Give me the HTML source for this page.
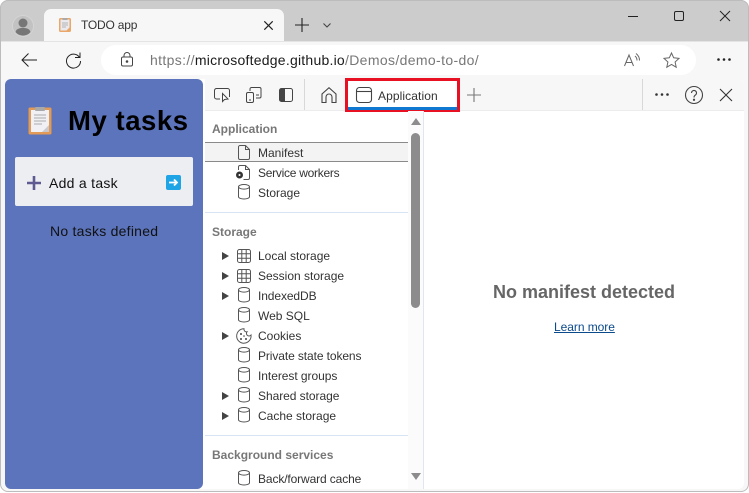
<!DOCTYPE html>
<html><head><meta charset="utf-8"><style>
*{box-sizing:border-box}
html,body{margin:0;padding:0}
body{width:749px;height:493px;overflow:hidden;position:relative;background:#fff;font-family:"Liberation Sans",sans-serif;color:#333}
.a{position:absolute}
.t{position:absolute;white-space:nowrap;line-height:16px}
svg{position:absolute;overflow:visible;fill:none}
.n{font-size:12px;color:#333;left:258px}
.h{font-size:12px;font-weight:bold;color:#777;left:212px}
</style></head><body>
<svg width="0" height="0" style="left:0;top:0"><defs><g id="db"><ellipse cx="6" cy="2.800" rx="5.500" ry="2.300"/><path d="M.5 2.800v9.900c0 1.300 2.500 2.300 5.500 2.300s5.500-1 5.500-2.300V2.800"/></g><g id="gr"><rect x=".5" y=".5" width="13" height="13" rx="2"/><path d="M4.800.5v13M9.200.5v13M.5 4.800h13M.5 9.200h13"/></g></defs></svg>
<div class="a" style="left:0;top:0;width:749px;height:492px;background:#f7f7f7;border-radius:8px"></div>
<div class="a" style="left:0;top:0;width:749px;height:41px;background:#cccccc;border-radius:8px 8px 0 0"></div>
<div class="a" style="left:44px;top:9px;width:240px;height:32px;background:#f7f7f7;border-radius:7px 7px 0 0"></div>
<!-- profile -->
<svg style="left:12px;top:15px" width="22" height="22"><circle cx="11" cy="11" r="10.500" fill="#c2c2c2" stroke="#d4d4d4"/><circle cx="11" cy="8" r="4.500" fill="#777"/><path d="M3.500 17c1-3.500 4-4 7.500-4s6.500.5 7.500 4c-2 2.500-5 3.500-7.500 3.500s-5.500-1-7.500-3.500z" fill="#777"/></svg>
<!-- favicon -->
<svg style="left:59px;top:18px" width="12" height="14"><rect x="0" y="0" width="12" height="14" rx="1.500" fill="#eaa76a"/><rect x="1.500" y="1.500" width="9" height="11" fill="#e9e9ef"/><rect x="3.500" y="0" width="5" height="2" fill="#a9a9a9"/><path d="M3 5h6M3 7h6M3 9h4" stroke="#b5b5b5"/><path d="M7.500 12.500l3-3v3z" fill="#eaa76a"/></svg>
<div class="t" style="left:81px;top:17px;font-size:12px;color:#333;letter-spacing:-.2px">TODO app</div>
<svg style="left:264px;top:21px" width="9" height="9" stroke="#222" stroke-width="1.200"><path d="M.3.300l8.400 8.400M8.700.300L.3 8.700"/></svg>
<svg style="left:295px;top:18px" width="14" height="14" stroke="#222" stroke-width="1.100"><path d="M7 0v14M0 7h14"/></svg>
<svg style="left:323px;top:23px" width="8" height="5" stroke="#444" stroke-width="1.100"><path d="M.5.500L4 4 7.500.5"/></svg>
<!-- window controls -->
<svg style="left:628px;top:16px" width="10" height="2" stroke="#222"><path d="M0 .5h10"/></svg>
<svg style="left:674px;top:11px" width="10" height="10" stroke="#222"><rect x=".5" y=".5" width="9" height="9" rx="1.500"/></svg>
<svg style="left:720px;top:11px" width="10" height="10" stroke="#222"><path d="M0 0l10 10M10 0L0 10"/></svg>
<div class="a" style="left:0;top:41px;width:749px;height:1px;background:#e4e4e4"></div>
<!-- nav -->
<svg style="left:21px;top:53px" width="16" height="14" stroke="#222"><path d="M16 7H1M7.500.5L1 7l6.500 6.500"/></svg>
<svg style="left:65px;top:52px" width="16" height="16" stroke="#222"><path d="M14.500 5.500A7 7 0 1 0 15.500 9M15 .5v5h-5"/></svg>
<div class="a" style="left:101px;top:45px;width:595px;height:30px;background:#fff;border-radius:15px"></div>
<svg style="left:121px;top:52px" width="12" height="15" stroke="#444"><rect x=".5" y="5" width="11" height="9" rx="1.500"/><path d="M3 5V3.500a3 3 0 0 1 6 0V5"/><circle cx="6" cy="9.500" r=".8" fill="#444"/></svg>
<div class="t" style="left:150px;top:52px;font-size:14px;color:#777;letter-spacing:.36px">https://<span style="color:#1a1a1a;letter-spacing:.23px">microsoftedge.github.io</span>/Demos/demo-to-do/</div>
<svg style="left:624px;top:53px" width="17" height="14" stroke="#666"><path d="M.5 13L5 2l4.500 11M2 9.500h6"/><path d="M12 .5c2 1.500 3.500 4 3.500 7M11 3c1.200 1 2 2.500 2 4.500"/></svg>
<svg style="left:663px;top:52px" width="17" height="16" stroke="#666"><path d="M8.500 1l2.200 4.800 5.300.6-3.900 3.600 1.100 5.200-4.700-2.700-4.700 2.700 1.100-5.200L1 6.400l5.300-.6z"/></svg>
<svg style="left:717px;top:58px" width="14" height="3"><circle cx="1.500" cy="1.500" r="1.300" fill="#222"/><circle cx="7" cy="1.500" r="1.300" fill="#222"/><circle cx="12.500" cy="1.500" r="1.300" fill="#222"/></svg>
<!-- page -->
<div class="a" style="left:5px;top:79px;width:739px;height:410px;background:#fff;border-radius:6px"></div>
<div class="a" style="left:5px;top:79px;width:198px;height:410px;background:#5c74bb;border-radius:6px"></div>
<svg style="left:28px;top:106px" width="24" height="29"><rect x=".5" y="1.500" width="23" height="27" rx="1.500" fill="#e29a56"/><rect x="3" y="4" width="18" height="22" fill="#f1f1f5"/><rect x="7" y="1" width="10" height="4" rx="1" fill="#a9a9a9"/><path d="M6 9h12M6 12h12M6 15h12M6 18h8" stroke="#aaa"/><path d="M14 26l7-7v7z" fill="#c9c9cf"/></svg>
<div class="t" style="left:68px;top:104px;font-size:27.500px;line-height:34px;font-weight:bold;color:#000;letter-spacing:.55px">My tasks</div>
<div class="a" style="left:15px;top:157px;width:178px;height:49px;background:#edeef2;border-radius:2px"></div>
<svg style="left:27px;top:176px" width="14" height="14" stroke="#5f5a92" stroke-width="2.600"><path d="M7 0v14M0 7h14"/></svg>
<div class="t" style="left:49px;top:175px;font-size:14px;color:#111;letter-spacing:.28px">Add a task</div>
<svg style="left:166px;top:175px" width="15" height="15"><rect width="15" height="15" rx="2" fill="#1fa5e6"/><path d="M3 7.500h8M8 4.500l3 3-3 3" stroke="#fff" stroke-width="1.800"/></svg>
<div class="t" style="left:50px;top:223px;font-size:14px;color:#111;letter-spacing:.25px">No tasks defined</div>
<!-- devtools toolbar -->
<div class="a" style="left:205px;top:79px;width:539px;height:31px;background:#f7f7f7;border-radius:0 6px 0 0"></div>
<div class="a" style="left:205px;top:110px;width:539px;height:1px;background:#ececec"></div>
<svg style="left:214px;top:88px" width="17" height="15" stroke="#444"><path d="M6 11H2.500a2 2 0 0 1-2-2V2.500a2 2 0 0 1 2-2h11a2 2 0 0 1 2 2V9"/><path d="M8.500 5.500v8l2-2 3.500-.5z" fill="#fff"/></svg>
<svg style="left:246px;top:87px" width="16" height="16" stroke="#444"><rect x=".5" y="5.500" width="7" height="10" rx="1.500"/><path d="M4 4V2a1.500 1.500 0 0 1 1.500-1.500h8A1.500 1.500 0 0 1 15 2v7.500A1.500 1.500 0 0 1 13.500 11H10M10 8h3M3 13h2"/></svg>
<svg style="left:279px;top:88px" width="14" height="14" stroke="#444"><rect x=".5" y=".5" width="13" height="13" rx="2"/><rect x="1" y="1" width="5" height="12" fill="#444" stroke="none"/></svg>
<div class="a" style="left:304px;top:79px;width:1px;height:31px;background:#d8d8d8"></div>
<svg style="left:321px;top:87px" width="16" height="16" stroke="#444" stroke-width="1.100"><path d="M1 15.500V7l7-6.300L15 7v8.500h-4V10a3 3 0 0 0-6 0v5.500z"/></svg>
<div class="a" style="left:345px;top:78px;width:115px;height:34px;background:#fff;border:3px solid #e81123"></div>
<div class="a" style="left:348px;top:107px;width:109px;height:3px;background:#0f78d0"></div>
<svg style="left:356px;top:87px" width="16" height="16" stroke="#444" stroke-width="1.100"><rect x=".5" y=".5" width="15" height="15" rx="3"/><path d="M.5 4.500h15"/></svg>
<div class="t" style="left:378px;top:88px;font-size:12px;color:#333;letter-spacing:.1px">Application</div>
<svg style="left:467px;top:88px" width="14" height="14" stroke="#777" stroke-width="1.100"><path d="M7 0v14M0 7h14"/></svg>
<div class="a" style="left:642px;top:79px;width:1px;height:31px;background:#d8d8d8"></div>
<svg style="left:655px;top:93px" width="14" height="3"><circle cx="1.500" cy="1.500" r="1.300" fill="#333"/><circle cx="7" cy="1.500" r="1.300" fill="#333"/><circle cx="12.500" cy="1.500" r="1.300" fill="#333"/></svg>
<svg style="left:685px;top:86px" width="18" height="18" stroke="#444" stroke-width="1.100"><circle cx="9" cy="9" r="8.500"/><path d="M6.500 7a2.500 2.500 0 1 1 3.800 2.100C9.300 9.800 9 10.300 9 11.500"/><circle cx="9" cy="13.800" r=".6" fill="#444"/></svg>
<svg style="left:720px;top:89px" width="12" height="12" stroke="#333" stroke-width="1.100"><path d="M0 0l12 12M12 0L0 12"/></svg>
<!-- sidebar -->
<div class="a" style="left:408px;top:111px;width:15px;height:378px;background:#fbfbfb"></div>
<div class="a" style="left:423px;top:111px;width:1px;height:378px;background:#dfe6f2"></div>
<div class="a" style="left:411px;top:133px;width:9px;height:175px;background:#8c8c8c;border-radius:4.500px"></div>
<svg style="left:411px;top:118px" width="10" height="7"><path d="M5 0l5 7H0z" fill="#8c8c8c"/></svg>
<svg style="left:411px;top:473px" width="10" height="7"><path d="M5 7L0 0h10z" fill="#8c8c8c"/></svg>
<div class="t h" style="top:121px">Application</div>
<div class="a" style="left:205px;top:142px;width:203px;height:20px;background:#f3f3f3;border-top:1px solid #8a8a8a;border-bottom:1px solid #8a8a8a"></div>
<div class="t n" style="top:145px">Manifest</div>
<div class="t n" style="top:165px;letter-spacing:-.27px">Service workers</div>
<div class="t n" style="top:185px">Storage</div>
<div class="a" style="left:205px;top:212px;width:203px;height:1px;background:#d6e4f5"></div>
<div class="t h" style="top:224px">Storage</div>
<div class="t n" style="top:248px">Local storage</div>
<div class="t n" style="top:268px">Session storage</div>
<div class="t n" style="top:288px;letter-spacing:-.1px">IndexedDB</div>
<div class="t n" style="top:308px">Web SQL</div>
<div class="t n" style="top:328px">Cookies</div>
<div class="t n" style="top:348px;letter-spacing:-.1px">Private state tokens</div>
<div class="t n" style="top:368px;letter-spacing:-.05px">Interest groups</div>
<div class="t n" style="top:388px;letter-spacing:-.05px">Shared storage</div>
<div class="t n" style="top:408px">Cache storage</div>
<div class="a" style="left:205px;top:435px;width:203px;height:1px;background:#d6e4f5"></div>
<div class="t h" style="top:447px">Background services</div>
<div class="t n" style="top:471px;letter-spacing:-.12px">Back/forward cache</div>
<!-- icons -->
<svg style="left:238px;top:145px" width="12" height="15" stroke="#555"><path d="M.5 2a1.500 1.500 0 0 1 1.500-1.500h5.500l4 4V13a1.500 1.500 0 0 1-1.500 1.500H2A1.500 1.500 0 0 1 .5 13zM7.500.5v4h4"/></svg>
<svg style="left:235px;top:165px" width="15" height="15" stroke="#555"><path d="M3.500 5V2A1.500 1.500 0 0 1 5 .5h5.500l4 4V13a1.500 1.500 0 0 1-1.500 1.500H8.500M10.500.5v4h4"/><circle cx="4.500" cy="10" r="3" fill="#333" stroke="#333"/><circle cx="4.500" cy="10" r="1" fill="#fff" stroke="none"/></svg>
<svg style="left:238px;top:184px" width="12" height="16" stroke="#555"><use href="#db"/></svg>
<svg style="left:237px;top:249px" width="14" height="14" stroke="#555"><use href="#gr"/></svg>
<svg style="left:237px;top:269px" width="14" height="14" stroke="#555"><use href="#gr"/></svg>
<svg style="left:238px;top:287px" width="12" height="16" stroke="#555"><use href="#db"/></svg>
<svg style="left:238px;top:307px" width="12" height="16" stroke="#555"><use href="#db"/></svg>
<svg style="left:236px;top:328px" width="16" height="16" stroke="#555"><path d="M8 .8a2.500 2.500 0 0 0 3 3 2.500 2.500 0 0 0 4 3.200A7.200 7.200 0 1 1 8 .8z"/><circle cx="5" cy="6" r="1" fill="#444" stroke="none"/><circle cx="5" cy="11" r="1" fill="#444" stroke="none"/><circle cx="10" cy="11" r="1" fill="#444" stroke="none"/><circle cx="8" cy="8" r=".8" fill="#444" stroke="none"/></svg>
<svg style="left:238px;top:347px" width="12" height="16" stroke="#555"><use href="#db"/></svg>
<svg style="left:238px;top:367px" width="12" height="16" stroke="#555"><use href="#db"/></svg>
<svg style="left:238px;top:387px" width="12" height="16" stroke="#555"><use href="#db"/></svg>
<svg style="left:238px;top:407px" width="12" height="16" stroke="#555"><use href="#db"/></svg>
<svg style="left:238px;top:470px" width="12" height="16" stroke="#555"><use href="#db"/></svg>
<svg style="left:222px;top:252px" width="7" height="8"><path d="M0 0l7 4-7 4z" fill="#444"/></svg>
<svg style="left:222px;top:272px" width="7" height="8"><path d="M0 0l7 4-7 4z" fill="#444"/></svg>
<svg style="left:222px;top:292px" width="7" height="8"><path d="M0 0l7 4-7 4z" fill="#444"/></svg>
<svg style="left:222px;top:332px" width="7" height="8"><path d="M0 0l7 4-7 4z" fill="#444"/></svg>
<svg style="left:222px;top:392px" width="7" height="8"><path d="M0 0l7 4-7 4z" fill="#444"/></svg>
<svg style="left:222px;top:412px" width="7" height="8"><path d="M0 0l7 4-7 4z" fill="#444"/></svg>
<!-- main -->
<div class="t" style="left:424px;width:320px;text-align:center;top:282px;line-height:20px;font-size:18px;font-weight:bold;color:#666">No manifest detected</div>
<div class="t" style="left:554px;top:319px;font-size:12px;color:#0b4a8b;text-decoration:underline;letter-spacing:-.05px">Learn more</div>
<!-- window border -->
<div class="a" style="left:0;top:0;width:749px;height:492px;border:1px solid #bcbcbc;border-radius:8px"></div>
</body></html>
